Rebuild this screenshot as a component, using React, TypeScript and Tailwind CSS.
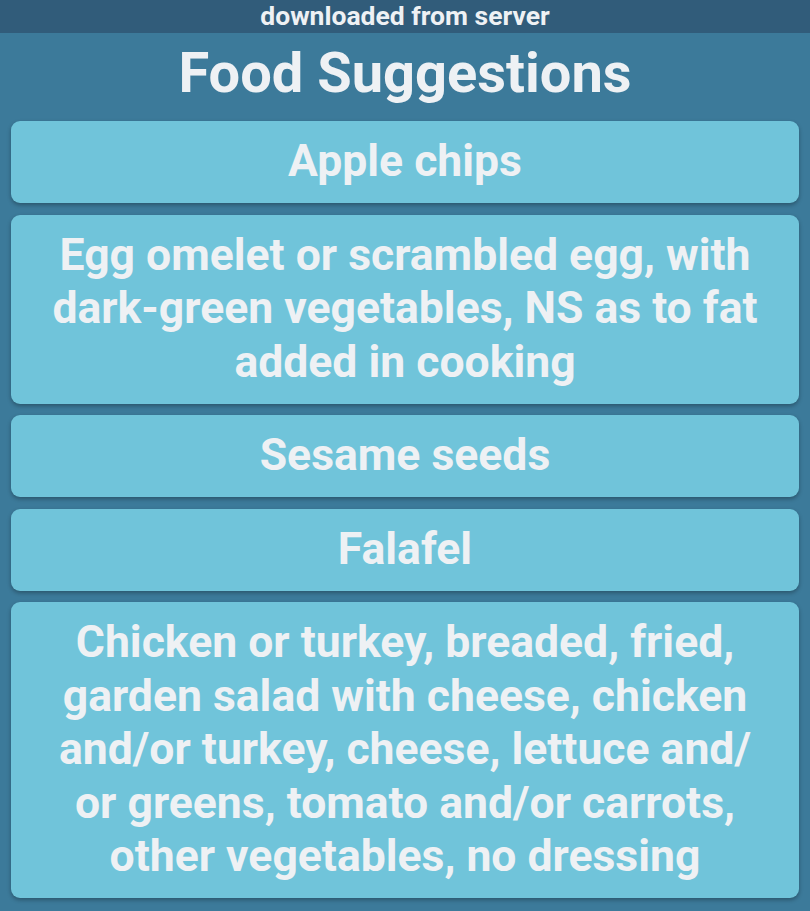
import React from 'react';

const foods = [
  'Apple chips',
  'Egg omelet or scrambled egg, with dark-green vegetables, NS as to fat added in cooking',
  'Sesame seeds',
  'Falafel',
  'Chicken or turkey, breaded, fried, garden salad with cheese, chicken and/or turkey, cheese, lettuce and/\u200Bor greens, tomato and/or carrots, other vegetables, no dressing',
];

export default function App() {
  return (
    <div className="min-h-[911px] w-[810px] bg-[#3c7a9a] font-['Roboto','Liberation_Sans',sans-serif] text-[#eef1f4]">
      <div className="flex h-[33px] items-center justify-center bg-[#315c7a] text-[26.5px] font-bold leading-none">
        downloaded from server
      </div>
      <h1 className="pt-[7px] pb-[15px] text-center text-[56px] font-bold leading-[66px]">Food Suggestions</h1>
      <div className="flex flex-col gap-[11.5px] px-[11px]">
        {foods.map((food) => (
          <div
            key={food}
            className="rounded-[9px] bg-[#70c4da] px-[32px] py-[14.25px] text-center text-[44.5px] font-bold leading-[53.5px] shadow-[0_2px_4px_rgba(0,0,0,0.3)]"
          >
            {food}
          </div>
        ))}
      </div>
    </div>
  );
}
